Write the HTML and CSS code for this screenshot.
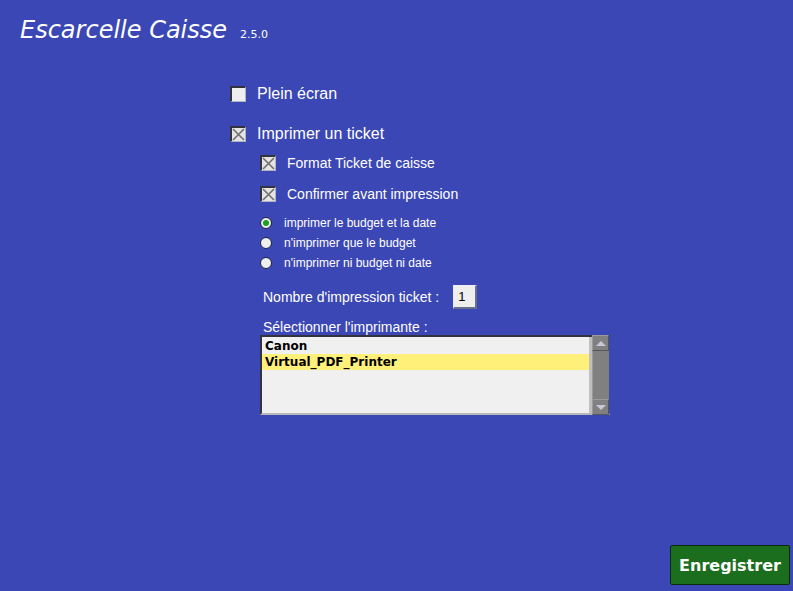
FILE: index.html
```html
<!DOCTYPE html>
<html lang="fr">
<head>
<meta charset="utf-8">
<title>Escarcelle Caisse</title>
<link rel="stylesheet" href="styles.css">
</head>
<body>
<div class="app">
  <header class="header">
    <h1 class="title">Escarcelle Caisse</h1>
    <span class="version">2.5.0</span>
  </header>
  <main class="form">
    <label class="check big first"><span class="box"></span><span>Plein écran</span></label>
    <label class="check big second"><span class="box checked"></span><span>Imprimer un ticket</span></label>
    <div class="sub">
      <label class="check mid"><span class="box checked"></span><span>Format Ticket de caisse</span></label>
      <label class="check mid second2"><span class="box checked"></span><span>Confirmer avant impression</span></label>
      <div class="radios">
        <label class="radio"><span class="dot on"></span><span>imprimer le budget et la date</span></label>
        <label class="radio"><span class="dot"></span><span>n'imprimer que le budget</span></label>
        <label class="radio"><span class="dot"></span><span>n'imprimer ni budget ni date</span></label>
      </div>
      <div class="count"><span>Nombre d'impression ticket :</span><span class="num">1</span></div>
      <div class="plabel">Sélectionner l'imprimante :</div>
      <div class="list">
        <div class="items">
          <div class="item">Canon</div>
          <div class="item sel">Virtual_PDF_Printer</div>
        </div>
        <div class="scroll">
          <div class="sbtn"><span class="up"></span></div>
          <div class="track"></div>
          <div class="sbtn"><span class="down"></span></div>
        </div>
      </div>
    </div>
  </main>
  <footer class="footer">
    <button class="save">Enregistrer</button>
  </footer>
</div>
</body>
</html>
```
FILE: styles.css
```css
* { box-sizing: border-box; }
html, body { margin: 0; height: 100%; }
body {
  background: #3b47b4;
  color: #fff;
  font-family: "Liberation Sans", Arial, sans-serif;
}
.app {
  height: 591px;
  display: flex;
  flex-direction: column;
}
.header {
  display: flex;
  align-items: baseline;
  padding: 14px 0 0 20px;
  height: 60px;
}
.title {
  margin: 0;
  font-family: "DejaVu Sans", sans-serif;
  font-style: italic;
  font-weight: normal;
  font-size: 24px;
  line-height: 32px;
}
.version {
  font-family: "DejaVu Sans", sans-serif;
  font-size: 11px;
  margin-left: 13px;
}
.form {
  padding-left: 230px;
  display: flex;
  flex-direction: column;
  flex: 1;
}
.check {
  display: flex;
  align-items: center;
}
.box {
  width: 16px;
  height: 16px;
  background: #eeeeee;
  border-style: solid;
  border-width: 2px 1px 1px 2px;
  border-color: #33333f #b0b4c8 #b0b4c8 #33333f;
  position: relative;
  flex: none;
}
.box.checked {
  background: #e4e4e4 url("data:image/svg+xml,%3Csvg xmlns='http://www.w3.org/2000/svg' width='13' height='13'%3E%3Cpath d='M1 1L12 12M12 1L1 12' stroke='%23707070' stroke-width='1.6'/%3E%3C/svg%3E") no-repeat center;
}
.big { font-size: 16px; height: 20px; }
.big .box { margin-right: 11px; }
.first { margin-top: 24px; }
.second { margin-top: 20px; }
.sub {
  padding-left: 30px;
  display: flex;
  flex-direction: column;
}
.mid { font-size: 14px; height: 18px; margin-top: 10px; }
.mid .box { margin-right: 11px; }
.second2 { margin-top: 13px; }
.radios {
  margin-top: 12px;
  display: flex;
  flex-direction: column;
  gap: 4px;
}
.radio {
  display: flex;
  align-items: center;
  font-size: 12px;
  height: 16px;
}
.dot {
  width: 12px;
  height: 12px;
  border-radius: 50%;
  background: #eeeeee;
  border: 1px solid #1b2240;
  margin-right: 12px;
  position: relative;
  flex: none;
}
.dot.on::after {
  content: "";
  position: absolute;
  left: 2px; top: 2px;
  width: 6px; height: 6px;
  border-radius: 50%;
  background: #1aa21a;
}
.count {
  margin-top: 14px;
  margin-left: 3px;
  display: flex;
  align-items: center;
  font-size: 14px;
  height: 24px;
}
.num {
  margin-left: 14px;
  width: 24px;
  height: 24px;
  background: #eeeeee;
  color: #000;
  font-size: 13px;
  padding: 4px 0 0 4px;
  border-style: solid;
  border-width: 1px 2px 2px 1px;
  border-color: #eeeeee #6a6e8a #6a6e8a #eeeeee;
  line-height: 14px;
}
.plabel {
  margin-top: 9px;
  margin-left: 3px;
  font-size: 14px;
  line-height: 18px;
}
.list {
  margin-top: -1px;
  width: 350px;
  height: 80px;
  display: flex;
  border-style: solid;
  border-width: 2px 1px 2px 2px;
  border-color: #333340 #3b47b4 #b8b8b8 #333340;
  background: #f0f0f0;
}
.items {
  flex: 1;
  padding-top: 1px;
  border-right: 3px solid #bfbfbf;
}
.item {
  color: #000;
  font-family: "DejaVu Sans", sans-serif;
  font-weight: bold;
  font-size: 12px;
  height: 16px;
  line-height: 16px;
  padding-left: 3px;
}
.item.sel { background: #fff07a; }
.scroll {
  width: 17px;
  display: flex;
  flex-direction: column;
  background: #808080;
  margin-top: -2px;
  margin-bottom: -2px;
}
.sbtn {
  height: 16px;
  background: #808080;
  border: 1px solid #55555a;
  border-left-color: #9a9a9a;
  border-top-color: #9a9a9a;
  display: flex;
  align-items: center;
  justify-content: center;
}
.track {
  flex: 1;
  background: #808080;
  border-left: 1px solid #9a9a9a;
}
.up, .down {
  width: 0; height: 0;
  border-left: 5px solid transparent;
  border-right: 5px solid transparent;
}
.up { border-bottom: 5px solid #c8c8d8; }
.down { border-top: 5px solid #c8c8d8; }
.footer {
  display: flex;
  justify-content: flex-end;
  padding: 0 3px 6px 0;
}
.save {
  width: 120px;
  height: 40px;
  background: #1b6e1d;
  color: #fff;
  border: 1px solid #0b2a0c;
  border-radius: 2px;
  font-family: "DejaVu Sans", sans-serif;
  font-weight: bold;
  font-size: 16px;
  padding: 0;
}
```
